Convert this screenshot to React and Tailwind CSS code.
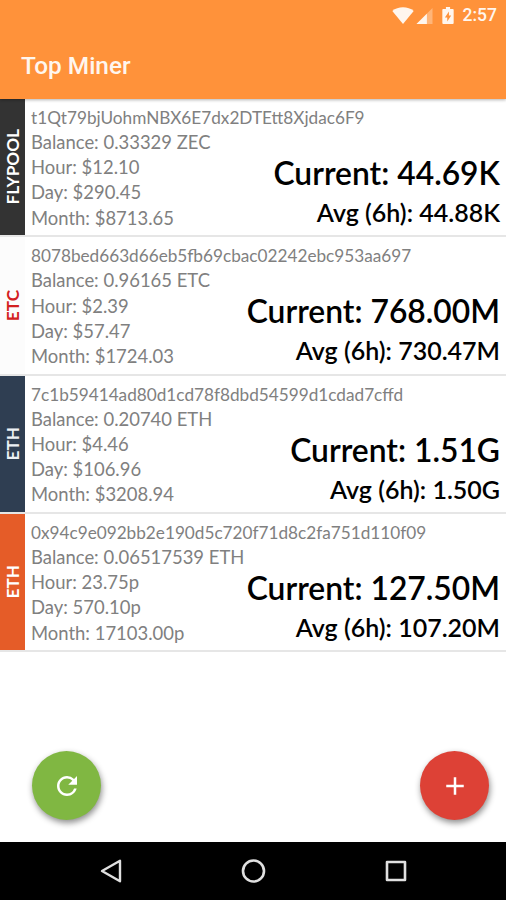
import React from 'react';
import { MdRefresh, MdAdd } from 'react-icons/md';

const miners = [
    {
        pool: 'FLYPOOL',
        strip: 'bg-[#333333] text-white',
        address: 't1Qt79bjUohmNBX6E7dx2DTEtt8Xjdac6F9',
        balance: '0.33329 ZEC',
        hour: '$12.10',
        day: '$290.45',
        month: '$8713.65',
        current: '44.69K',
        average: '44.88K',
    },
    {
        pool: 'ETC',
        strip: 'bg-[#fcfcfc] text-[#d32020]',
        address: '8078bed663d66eb5fb69cbac02242ebc953aa697',
        balance: '0.96165 ETC',
        hour: '$2.39',
        day: '$57.47',
        month: '$1724.03',
        current: '768.00M',
        average: '730.47M',
    },
    {
        pool: 'ETH',
        strip: 'bg-[#2f3e52] text-[#ecf0f4]',
        address: '7c1b59414ad80d1cd78f8dbd54599d1cdad7cffd',
        balance: '0.20740 ETH',
        hour: '$4.46',
        day: '$106.96',
        month: '$3208.94',
        current: '1.51G',
        average: '1.50G',
    },
    {
        pool: 'ETH',
        strip: 'bg-[#e55c28] text-white',
        address: '0x94c9e092bb2e190d5c720f71d8c2fa751d110f09',
        balance: '0.06517539 ETH',
        hour: '23.75p',
        day: '570.10p',
        month: '17103.00p',
        current: '127.50M',
        average: '107.20M',
    },
];

const StatusBar = () => {
    return (
        <div className="h-[31px] flex items-center justify-end pr-[9px] text-[#fff6ee]">
            <svg className="w-[22px] h-[17px] mr-[2px]" viewBox="0 0 22 17" fill="currentColor">
                <path d="M11 17 L0.3 4 C6 -1 16 -1 21.7 4 Z" />
            </svg>
            <svg className="w-[17px] h-[16px] mr-[9px]" viewBox="0 0 17 17" fill="currentColor">
                <path d="M17 0 V17 H0 Z" opacity="0.35" />
                <path d="M11 6 V17 H0 Z" />
            </svg>
            <svg className="w-[12px] h-[17px] mr-[9px]" viewBox="0 0 12 18" fill="currentColor" fillRule="evenodd">
                <path d="M3.8 0 H8.2 V2 H11 Q12 2 12 3 V17 Q12 18 11 18 H1 Q0 18 0 17 V3 Q0 2 1 2 H3.8 Z M7 4.8 L2.7 11 H5.2 V15.4 L9.4 9 H7 Z" />
            </svg>
            <span className="text-[17.5px] leading-none font-medium">2:57</span>
        </div>
    );
};

const MinerRow = ({ miner }) => {
    return (
        <li className="h-[138.3px] flex border-b-2 border-[#e6e6e6]">
            <div className={`w-[25px] shrink-0 flex items-center justify-center ${miner.strip}`}>
                <span className="[writing-mode:vertical-rl] rotate-180 text-[17.2px] leading-none font-bold">{miner.pool}</span>
            </div>
            <div className="flex-1 min-w-0 pl-[6px] pr-[6px] pt-[6px] text-[18.45px] leading-[25.2px] text-[#808080]">
                <p className="text-[17.2px] leading-[25px] whitespace-nowrap">{miner.address}</p>
                <div className="flex justify-between">
                    <div className="whitespace-nowrap">
                        <p>Balance: {miner.balance}</p>
                        <p>Hour: {miner.hour}</p>
                        <p>Day: {miner.day}</p>
                        <p>Month: {miner.month}</p>
                    </div>
                    <div className="pt-[24px] text-right text-black font-semibold whitespace-nowrap">
                        <p className="text-[31.8px] leading-[39px]">Current: {miner.current}</p>
                        <p className="text-[25px] leading-[38px]">Avg (6h): {miner.average}</p>
                    </div>
                </div>
            </div>
        </li>
    );
};

const RoundButton = ({ label, className, children }) => {
    return (
        <button
            aria-label={label}
            className={`w-[69px] h-[69px] rounded-full flex items-center justify-center text-white shadow-[1px_3px_6px_rgba(0,0,0,0.45)] ${className}`}
        >
            {children}
        </button>
    );
};

const NavigationBar = () => {
    return (
        <nav className="h-[58px] bg-black flex items-center justify-between pl-[99px] pr-[99px] text-[#e0e0e0]">
            <svg className="w-[24px] h-[26px]" viewBox="0 0 24 26" fill="none" stroke="currentColor" strokeWidth="2.4" strokeLinejoin="round">
                <path d="M21 2.8 V23.2 L3 13 Z" />
            </svg>
            <svg className="w-[26px] h-[26px]" viewBox="0 0 26 26" fill="none" stroke="currentColor" strokeWidth="2.6">
                <circle cx="12.5" cy="13" r="10.5" />
            </svg>
            <svg className="w-[22px] h-[22px]" viewBox="0 0 22 22" fill="none" stroke="currentColor" strokeWidth="2.6" strokeLinejoin="round">
                <rect x="2" y="2" width="18" height="18" />
            </svg>
        </nav>
    );
};

const App = () => {
    return (
        <div className="w-[506px] h-[900px] flex flex-col overflow-hidden bg-white font-['Lato',sans-serif]">
            <header className="relative h-[99px] bg-[#ff923a] font-['Roboto',sans-serif] shadow-[0_1px_3px_rgba(0,0,0,0.3)]">
                <StatusBar />
                <h1 className="pl-[21px] h-[70px] flex items-center text-[24.4px] font-medium text-[#fff6ee]">Top Miner</h1>
            </header>
            <ul>
                {miners.map((miner) => (
                    <MinerRow key={miner.address} miner={miner} />
                ))}
            </ul>
            <div className="flex-1 flex items-end justify-between pl-8 pr-[17px] pb-[22px]">
                <RoundButton label="Refresh" className="bg-[#80b742]">
                    <MdRefresh className="w-[30px] h-[30px]" />
                </RoundButton>
                <RoundButton label="Add miner" className="bg-[#dd4136]">
                    <MdAdd className="w-[30px] h-[30px]" />
                </RoundButton>
            </div>
            <NavigationBar />
        </div>
    );
};

export default App;
